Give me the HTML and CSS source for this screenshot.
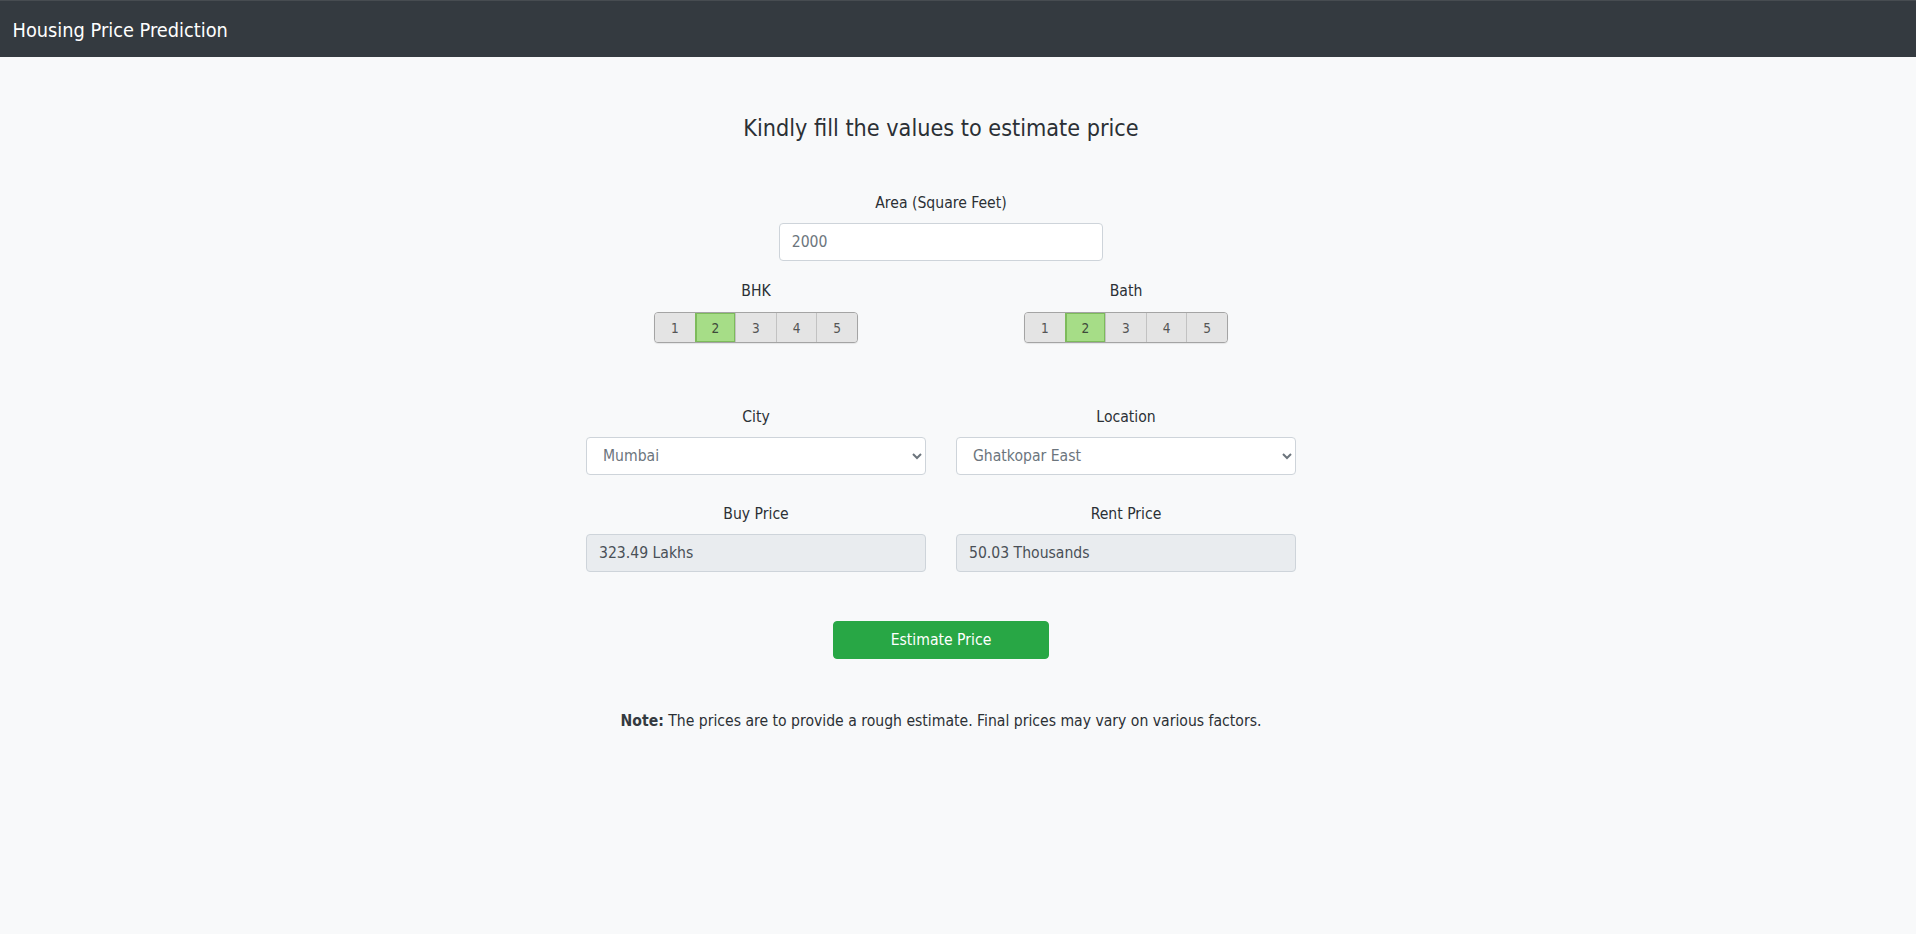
FILE: index.html
```html
<!DOCTYPE html>
<html lang="en">
<head>
<meta charset="utf-8">
<title>Housing Price Prediction</title>
<link rel="stylesheet" href="styles.css">
</head>
<body>
<nav class="navbar">
  <span class="brand">Housing Price Prediction</span>
</nav>
<main class="page">
  <div class="form">
    <h4 class="title">Kindly fill the values to estimate price</h4>

    <div class="field field-area">
      <label class="label" for="area">Area (Square Feet)</label>
      <input class="control" id="area" type="text" value="2000">
    </div>

    <div class="row row-seg">
      <div class="col">
        <div class="label">BHK</div>
        <div class="seg">
          <span class="seg-btn">1</span>
          <span class="seg-btn active">2</span>
          <span class="seg-btn">3</span>
          <span class="seg-btn">4</span>
          <span class="seg-btn">5</span>
        </div>
      </div>
      <div class="col">
        <div class="label">Bath</div>
        <div class="seg">
          <span class="seg-btn">1</span>
          <span class="seg-btn active">2</span>
          <span class="seg-btn">3</span>
          <span class="seg-btn">4</span>
          <span class="seg-btn">5</span>
        </div>
      </div>
    </div>

    <div class="row row-select">
      <div class="col">
        <label class="label" for="city">City</label>
        <select class="control select" id="city"><option>Mumbai</option></select>
      </div>
      <div class="col">
        <label class="label" for="loc">Location</label>
        <select class="control select" id="loc"><option>Ghatkopar East</option></select>
      </div>
    </div>

    <div class="row row-price">
      <div class="col">
        <label class="label" for="buy">Buy Price</label>
        <input class="control readonly" id="buy" type="text" value="323.49 Lakhs" readonly>
      </div>
      <div class="col">
        <label class="label" for="rent">Rent Price</label>
        <input class="control readonly" id="rent" type="text" value="50.03 Thousands" readonly>
      </div>
    </div>

    <div class="actions">
      <button class="btn-estimate" type="button">Estimate Price</button>
    </div>

    <p class="note"><b>Note:</b> The prices are to provide a rough estimate. Final prices may vary on various factors.</p>
  </div>
</main>
</body>
</html>
```
FILE: styles.css
```css
* { box-sizing: border-box; }

html, body {
  margin: 0;
  padding: 0;
}

body {
  background: #f8f9fa;
  color: #212529;
  font-family: "DejaVu Sans Condensed", "DejaVu Sans", sans-serif;
  font-size: 15.6px;
  line-height: 24px;
  min-height: 934px;
}

.navbar {
  height: 57px;
  background: #343a40;
  border-top: 1px solid #474c51;
  padding: 4px 0 0 12.5px;
}

.brand {
  display: block;
  color: #ffffff;
  font-size: 19.8px;
  line-height: 52px;
}

.page {
  padding-right: 34px;
}

.form {
  width: 710px;
  margin: 0 auto;
  display: flex;
  flex-direction: column;
  align-items: stretch;
}

.title {
  margin: 57px 0 0;
  font-size: 23.2px;
  line-height: 28px;
  font-weight: normal;
  text-align: center;
  color: #2b3035;
}

.field {
  display: flex;
  flex-direction: column;
  align-items: center;
}

.field-area {
  margin-top: 49px;
}

.label {
  display: block;
  text-align: center;
  line-height: 24px;
  margin-bottom: 8px;
  color: #2b3035;
}

.control {
  display: block;
  width: 100%;
  height: 38px;
  padding: 0 12px;
  font-family: inherit;
  font-size: 15.6px;
  color: #495057;
  background: #ffffff;
  border: 1px solid #ced4da;
  border-radius: 4px;
  outline: none;
}

.field-area .control {
  width: 324.5px;
  color: #6c757d;
}

.select {
  padding-left: 12px;
  color: #6c757d;
}

.readonly {
  background: #e9ecef;
  color: #495057;
  padding-left: 12px;
}

.row {
  display: grid;
  grid-template-columns: 1fr 1fr;
  column-gap: 30px;
}

.col {
  display: flex;
  flex-direction: column;
  align-items: center;
}

.row-seg {
  margin-top: 18px;
}

.row-select {
  margin-top: 62px;
}

.row-price {
  margin-top: 27px;
}

.seg {
  display: flex;
  width: 204px;
  height: 31px;
  margin-top: 1px;
  border: 1px solid #a4a4a4;
  border-radius: 4px;
  overflow: hidden;
  background: #e4e4e4;
  box-shadow: 0 1px 1px rgba(0, 0, 0, 0.08);
}

.seg-btn {
  flex: 1;
  display: flex;
  align-items: center;
  justify-content: center;
  font-size: 13.5px;
  color: #555555;
  background: #e4e4e4;
  border-left: 1px solid #c2c2c2;
}

.seg-btn:first-child {
  border-left: none;
}

.seg-btn.active {
  background: #a6dd87;
  color: #3d4a3a;
  box-shadow: inset 0 0 0 1px #7dbb5b;
  border-left-color: #7dbb5b;
}

.actions {
  display: flex;
  justify-content: center;
  margin-top: 49px;
}

.btn-estimate {
  width: 216px;
  height: 38px;
  padding: 0;
  font-family: inherit;
  font-size: 15.6px;
  line-height: 24px;
  color: #ffffff;
  background: #28a745;
  border: 1px solid #28a745;
  border-radius: 4px;
}

.note {
  margin: 50px 0 0;
  text-align: center;
  color: #2b3035;
  white-space: nowrap;
}

.note b {
  font-weight: bold;
  color: #343a40;
}
```
